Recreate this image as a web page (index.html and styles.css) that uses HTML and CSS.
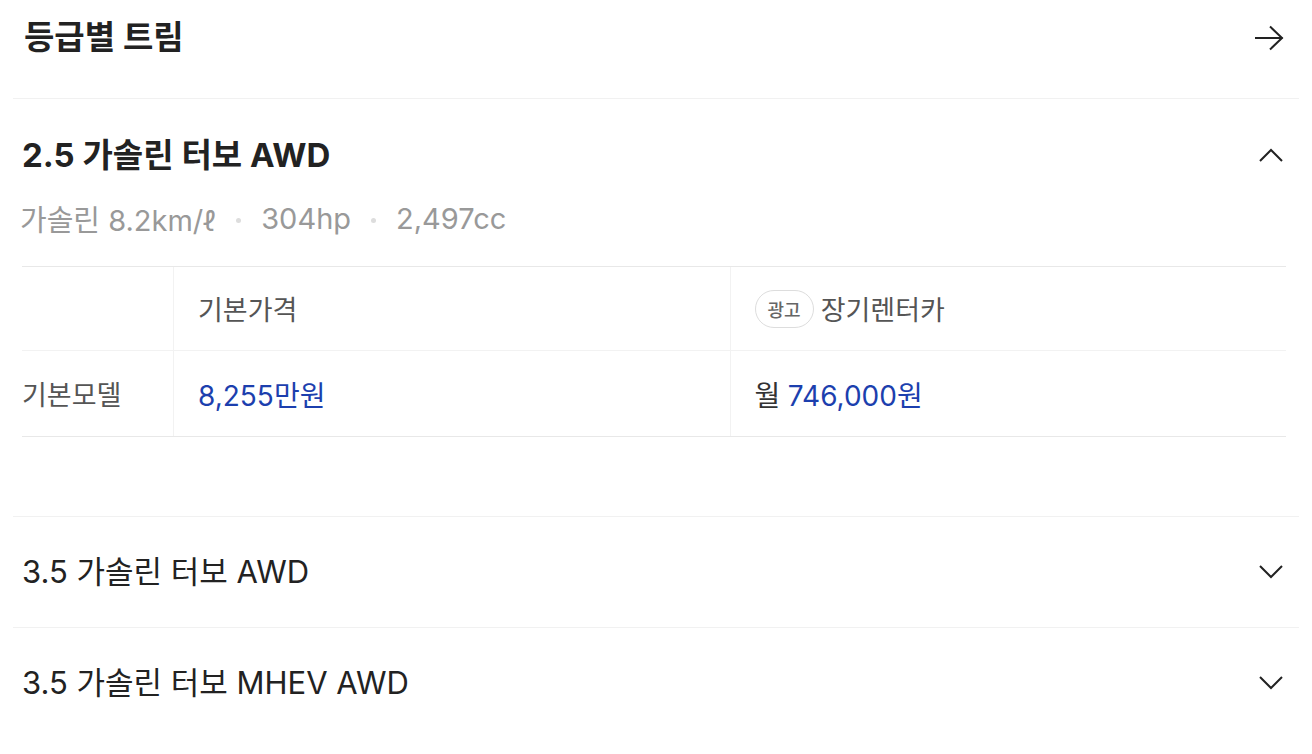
FILE: index.html
```html
<!DOCTYPE html>
<html lang="ko">
<head>
<meta charset="utf-8">
<link rel="stylesheet" href="styles.css">
</head>
<body>
<div class="page">
  <header class="head">
    <h2 class="head-title">등급별 트림</h2>
    <svg class="arrow" width="30" height="26" viewBox="0 0 30 26" fill="none" stroke="#222" stroke-width="2"><path d="M1 13H28.5"/><path d="M16 1.5L28 13L16 24.5"/></svg>
  </header>

  <section class="trim open">
    <div class="trim-row">
      <h3 class="trim-title bold">2.5 가솔린 터보 AWD</h3>
      <svg class="chev" width="24" height="14" viewBox="0 0 24 14" fill="none" stroke="#222" stroke-width="2"><path d="M1 13L12 2L23 13"/></svg>
    </div>
    <div class="spec">
      <span>가솔린 8.2km/ℓ</span><i class="dot"></i><span>304hp</span><i class="dot"></i><span>2,497cc</span>
    </div>
    <div class="table">
      <div class="cell c1 hd"></div>
      <div class="cell c2 hd">기본가격</div>
      <div class="cell c3 hd"><span class="badge">광고</span>장기렌터카</div>
      <div class="cell c1 bd">기본모델</div>
      <div class="cell c2 bd"><span class="blue">8,255만원</span></div>
      <div class="cell c3 bd"><span class="dark">월</span>&nbsp;<span class="blue">746,000원</span></div>
    </div>
  </section>

  <section class="trim">
    <div class="trim-row">
      <h3 class="trim-title">3.5 가솔린 터보 AWD</h3>
      <svg class="chev" width="24" height="14" viewBox="0 0 24 14" fill="none" stroke="#222" stroke-width="2"><path d="M1 1L12 12L23 1"/></svg>
    </div>
  </section>

  <section class="trim last">
    <div class="trim-row">
      <h3 class="trim-title">3.5 가솔린 터보 MHEV AWD</h3>
      <svg class="chev" width="24" height="14" viewBox="0 0 24 14" fill="none" stroke="#222" stroke-width="2"><path d="M1 1L12 12L23 1"/></svg>
    </div>
  </section>
</div>
</body>
</html>
```
FILE: styles.css
```css
* { box-sizing: border-box; }
html, body { margin: 0; padding: 0; background: #fff; }
body {
  font-family: "Inter", "Noto Sans CJK KR", "Noto Sans", sans-serif;
  color: #222;
}
.page { margin: 0 13px; }

.head {
  display: flex;
  justify-content: space-between;
  align-items: center;
  height: 99px;
  padding: 0 15px 24px 11px;
  border-bottom: 1px solid #f1f1f1;
}
.head-title {
  margin: 0;
  font-size: 33px;
  font-weight: 700;
  line-height: 40px;
  color: #222;
}
.arrow { display: block; margin-top: 2px; }

.trim { border-bottom: 1px solid #f1f1f1; padding: 35px 13px 35px 9px; }
.trim.last { border-bottom: none; }
.trim.open { padding: 36px 13px 79px 9px; }
.trim-row {
  display: flex;
  justify-content: space-between;
  align-items: center;
  height: 40px;
}
.trim-title {
  margin: 0;
  font-size: 31px;
  font-weight: 400;
  line-height: 40px;
  color: #222;
}
.trim-title.bold { font-size: 33px; font-weight: 700; }
.chev { display: block; margin-right: 3px; }

.spec {
  display: flex;
  align-items: center;
  margin-top: 23px;
  height: 40px;
  font-size: 29px;
  color: #999;
  margin-left: -2px;
}
.dot {
  display: inline-block;
  width: 5px;
  height: 5px;
  border-radius: 50%;
  background: #ddd;
  margin: 4px 20px 0 20px;
}

.table {
  margin-top: 28px;
  display: grid;
  grid-template-columns: 151px 1fr 1fr;
  border-top: 1px solid #e8e8e8;
  border-bottom: 1px solid #e8e8e8;
}
.cell {
  display: flex;
  align-items: center;
  font-size: 27px;
  color: #555;
}
.cell.hd { height: 84px; border-bottom: 1px solid #f2f2f2; }
.cell.bd { height: 85px; }
.cell.c2, .cell.c3 { border-left: 1px solid #f2f2f2; padding-left: 24px; }
.badge {
  display: inline-flex;
  align-items: center;
  justify-content: center;
  height: 38px;
  padding: 0 12px;
  border: 1.5px solid #ddd;
  border-radius: 19px;
  font-size: 18px;
  color: #666;
  margin-right: 7px;
  font-weight: 500;
}
.blue { color: #1c3fae; font-size: 28px; }
.dark { color: #333; font-size: 28px; }
```
